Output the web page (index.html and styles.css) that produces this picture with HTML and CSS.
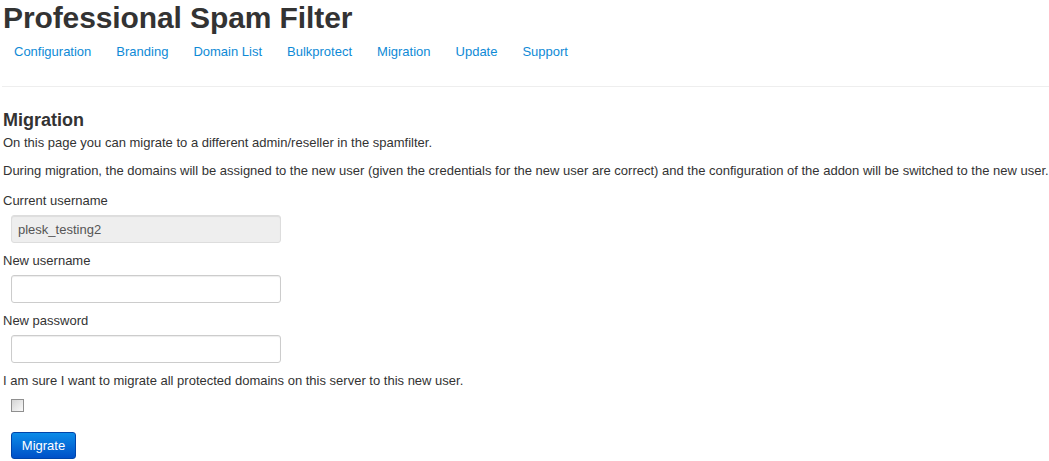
FILE: index.html
```html
<!DOCTYPE html>
<html>
<head>
<meta charset="utf-8">
<link rel="stylesheet" href="styles.css">
</head>
<body>
<div class="page">
  <h1 class="title">Professional Spam Filter</h1>
  <ul class="nav">
    <li><a href="#">Configuration</a></li>
    <li><a href="#">Branding</a></li>
    <li><a href="#">Domain List</a></li>
    <li><a href="#">Bulkprotect</a></li>
    <li><a href="#">Migration</a></li>
    <li><a href="#">Update</a></li>
    <li><a href="#">Support</a></li>
  </ul>
  <hr class="rule">
  <h2 class="heading">Migration</h2>
  <p class="intro">On this page you can migrate to a different admin/reseller in the spamfilter.</p>
  <p class="text">During migration, the domains will be assigned to the new user (given the credentials for the new user are correct) and the configuration of the addon will be switched to the new user.</p>
  <form class="form">
    <label class="label">Current username</label>
    <div class="field"><input class="input disabled" type="text" value="plesk_testing2" disabled></div>
    <label class="label">New username</label>
    <div class="field"><input class="input" type="text"></div>
    <label class="label">New password</label>
    <div class="field"><input class="input" type="password"></div>
    <label class="label">I am sure I want to migrate all protected domains on this server to this new user.</label>
    <div class="field check"><span class="checkbox"></span></div>
    <div class="field actions"><button class="btn" type="button">Migrate</button></div>
  </form>
</div>
</body>
</html>
```
FILE: styles.css
```css
html, body { margin: 0; padding: 0; background: #fff; }
body { font-family: "Liberation Sans", Arial, sans-serif; font-size: 13px; color: #333; }
.page { padding: 0 0 0 3px; }
.title { margin: 0; padding-top: 1px; font-size: 30px; line-height: 34px; font-weight: bold; color: #333; letter-spacing: -0.1px; }
.nav { list-style: none; margin: 0; padding: 0 0 0 11px; display: flex; gap: 25px; height: 32px; align-items: center; }
.nav a { color: #0e8ad6; text-decoration: none; font-size: 13px; }
.rule { margin: 19px 0 0 -1px; border: 0; border-top: 1px solid #eee; height: 0; }
.heading { margin: 22px 0 0; font-size: 18px; line-height: 22px; font-weight: bold; color: #333; }
.intro, .text { margin: 0; line-height: 18px; }
.intro { margin-top: 3px; }
.text { margin-top: 10px; white-space: nowrap; }
.form { display: flex; flex-direction: column; margin-top: 12px; }
.label { display: block; line-height: 18px; margin-bottom: 5px; }
.field { padding-left: 8px; margin-bottom: 9px; }
.input { box-sizing: border-box; width: 270px; height: 28px; border: 1px solid #ccc; border-radius: 3px; padding: 4px 6px; font-family: inherit; font-size: 13px; color: #555; background: #fff; box-shadow: inset 0 1px 1px rgba(0,0,0,0.075); }
.input.disabled { background: #eee; border-color: #ddd; color: #555; }
.check { padding-top: 4px; margin-bottom: 20px; }
.checkbox { display: block; width: 11px; height: 11px; border: 1px solid #8f8f8f; background: linear-gradient(135deg, #d4d4d4, #fafafa); }
.btn { display: block; width: 65px; height: 27px; border: 1px solid #0044aa; border-radius: 3px; background: linear-gradient(#0c8ce8, #0050c8); color: #fff; font-family: inherit; font-size: 13px; padding: 0; }
```
